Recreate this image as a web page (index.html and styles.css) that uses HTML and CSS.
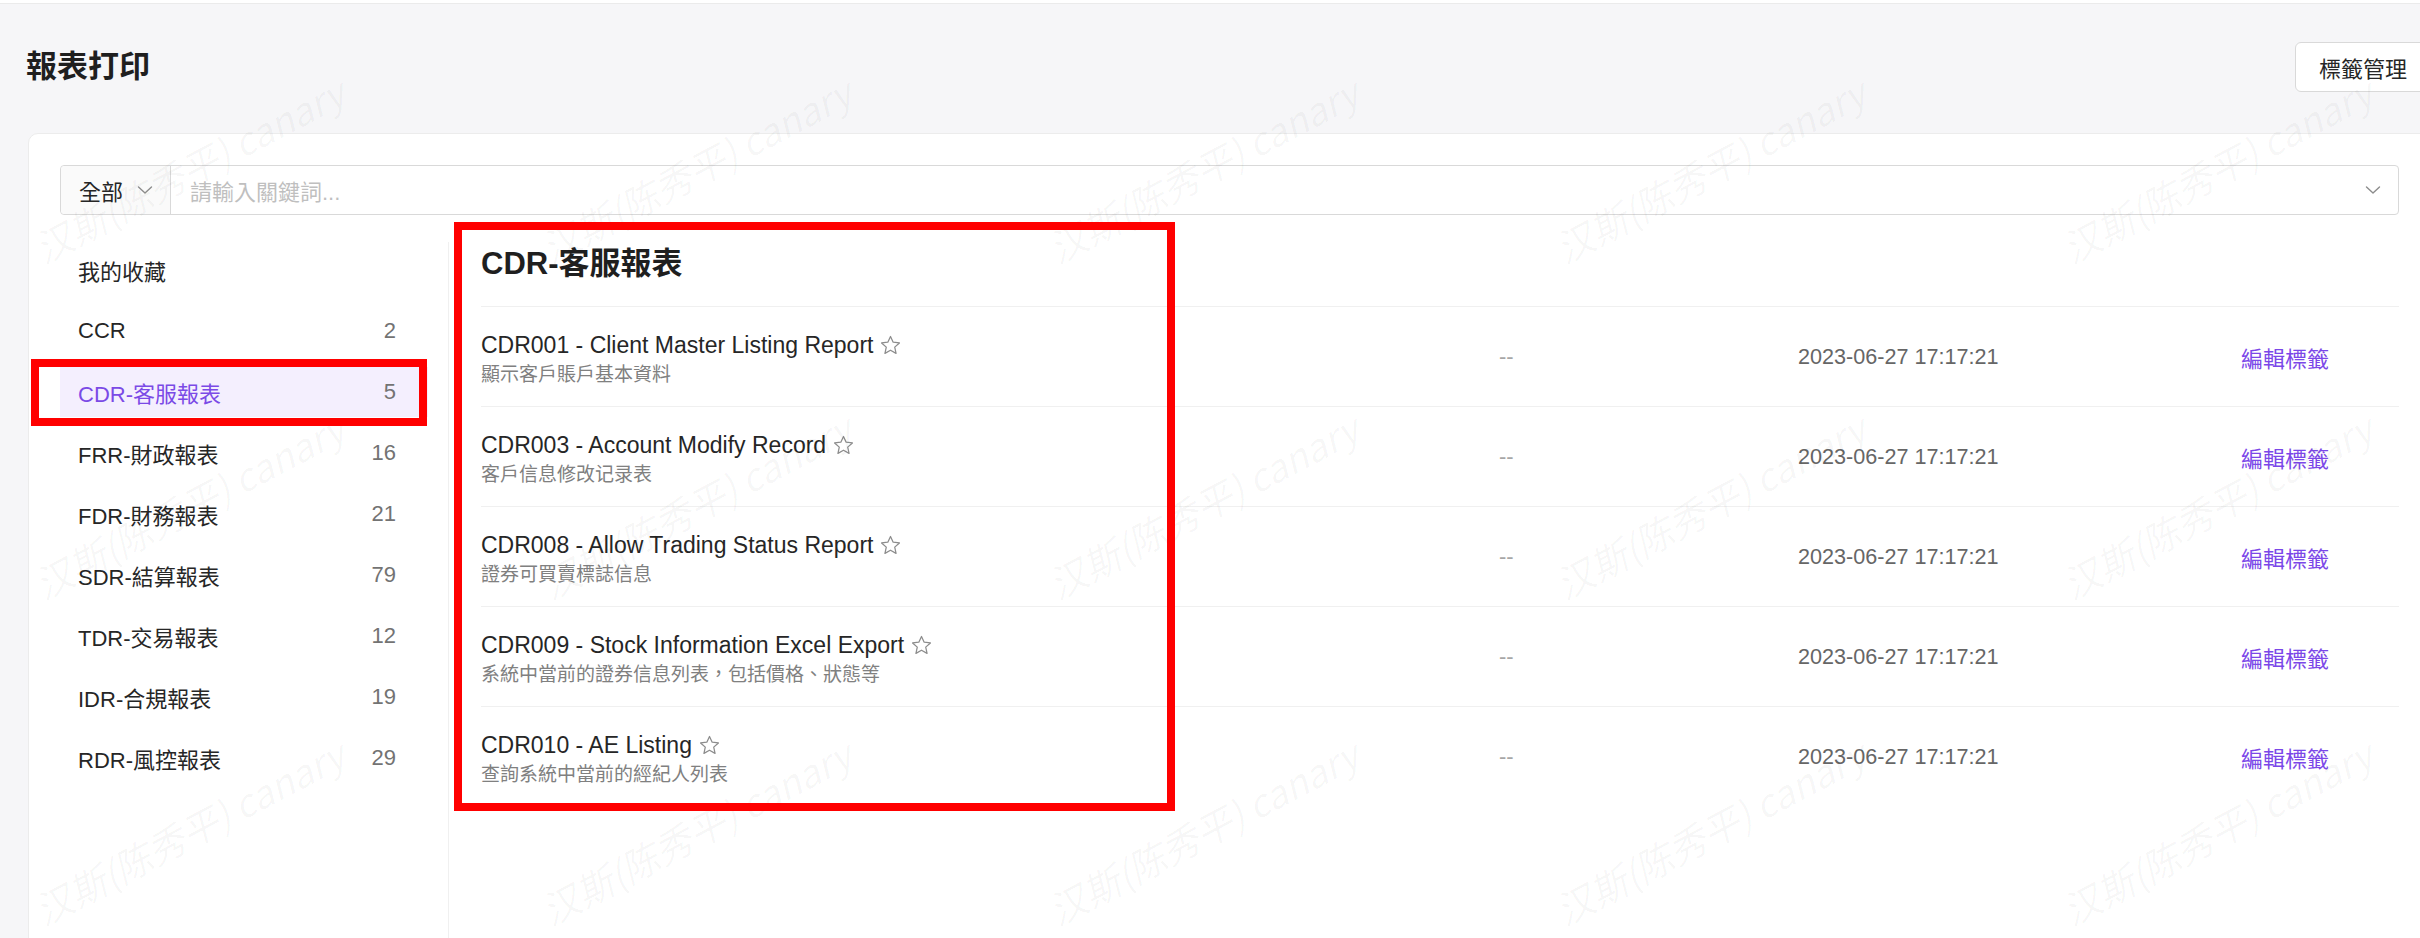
FILE: index.html
```html
<!DOCTYPE html>
<html lang="zh-Hant">
<head>
<meta charset="utf-8">
<title>報表打印</title>
<link rel="stylesheet" href="styles.css">
</head>
<body>
<div class="topbar"></div>
<div class="page">
  <header class="header">
    <h1 class="title">報表打印</h1>
    <button class="btn" type="button">標籤管理</button>
  </header>
  <section class="card">
    <div class="search">
      <div class="search-type">
        <span>全部</span>
        <svg class="chev" viewBox="0 0 16 16"><path d="M1.5 5 L8 11 L14.5 5" fill="none" stroke="#8c8c8c" stroke-width="1.4" stroke-linecap="round" stroke-linejoin="round"/></svg>
      </div>
      <div class="search-input">
        <span>請輸入關鍵詞...</span>
        <svg class="chev" viewBox="0 0 16 16"><path d="M1.5 5 L8 11 L14.5 5" fill="none" stroke="#8c8c8c" stroke-width="1.4" stroke-linecap="round" stroke-linejoin="round"/></svg>
      </div>
    </div>
    <div class="main">
      <nav class="side">
        <div class="side-item"><span>我的收藏</span></div>
        <div class="side-item"><span>CCR</span><span class="count">2</span></div>
        <div class="side-item active"><span>CDR-客服報表</span><span class="count">5</span></div>
        <div class="side-item"><span>FRR-財政報表</span><span class="count">16</span></div>
        <div class="side-item"><span>FDR-財務報表</span><span class="count">21</span></div>
        <div class="side-item"><span>SDR-結算報表</span><span class="count">79</span></div>
        <div class="side-item"><span>TDR-交易報表</span><span class="count">12</span></div>
        <div class="side-item"><span>IDR-合規報表</span><span class="count">19</span></div>
        <div class="side-item"><span>RDR-風控報表</span><span class="count">29</span></div>
      </nav>
      <div class="content">
        <h2 class="heading">CDR-客服報表</h2>

        <div class="row">
          <div class="name">
            <div class="name-title"><span>CDR001 - Client Master Listing Report</span><svg class="star" viewBox="0 0 24 24"><polygon points="12,2.6 14.8,8.6 21.3,9.3 16.4,13.7 17.8,20.2 12,16.9 6.2,20.2 7.6,13.7 2.7,9.3 9.2,8.6" fill="none" stroke="#8c8c8c" stroke-width="1.3" stroke-linejoin="round"/></svg></div>
            <div class="desc">顯示客戶賬戶基本資料</div>
          </div>
          <div class="dash">--</div>
          <div class="date">2023-06-27 17:17:21</div>
          <a class="action" href="#">編輯標籤</a>
        </div>

        <div class="row">
          <div class="name">
            <div class="name-title"><span>CDR003 - Account Modify Record</span><svg class="star" viewBox="0 0 24 24"><polygon points="12,2.6 14.8,8.6 21.3,9.3 16.4,13.7 17.8,20.2 12,16.9 6.2,20.2 7.6,13.7 2.7,9.3 9.2,8.6" fill="none" stroke="#8c8c8c" stroke-width="1.3" stroke-linejoin="round"/></svg></div>
            <div class="desc">客户信息修改记录表</div>
          </div>
          <div class="dash">--</div>
          <div class="date">2023-06-27 17:17:21</div>
          <a class="action" href="#">編輯標籤</a>
        </div>

        <div class="row">
          <div class="name">
            <div class="name-title"><span>CDR008 - Allow Trading Status Report</span><svg class="star" viewBox="0 0 24 24"><polygon points="12,2.6 14.8,8.6 21.3,9.3 16.4,13.7 17.8,20.2 12,16.9 6.2,20.2 7.6,13.7 2.7,9.3 9.2,8.6" fill="none" stroke="#8c8c8c" stroke-width="1.3" stroke-linejoin="round"/></svg></div>
            <div class="desc">證券可買賣標誌信息</div>
          </div>
          <div class="dash">--</div>
          <div class="date">2023-06-27 17:17:21</div>
          <a class="action" href="#">編輯標籤</a>
        </div>

        <div class="row">
          <div class="name">
            <div class="name-title"><span>CDR009 - Stock Information Excel Export</span><svg class="star" viewBox="0 0 24 24"><polygon points="12,2.6 14.8,8.6 21.3,9.3 16.4,13.7 17.8,20.2 12,16.9 6.2,20.2 7.6,13.7 2.7,9.3 9.2,8.6" fill="none" stroke="#8c8c8c" stroke-width="1.3" stroke-linejoin="round"/></svg></div>
            <div class="desc">系統中當前的證券信息列表，包括價格、狀態等</div>
          </div>
          <div class="dash">--</div>
          <div class="date">2023-06-27 17:17:21</div>
          <a class="action" href="#">編輯標籤</a>
        </div>

        <div class="row">
          <div class="name">
            <div class="name-title"><span>CDR010 - AE Listing</span><svg class="star" viewBox="0 0 24 24"><polygon points="12,2.6 14.8,8.6 21.3,9.3 16.4,13.7 17.8,20.2 12,16.9 6.2,20.2 7.6,13.7 2.7,9.3 9.2,8.6" fill="none" stroke="#8c8c8c" stroke-width="1.3" stroke-linejoin="round"/></svg></div>
            <div class="desc">查詢系統中當前的經紀人列表</div>
          </div>
          <div class="dash">--</div>
          <div class="date">2023-06-27 17:17:21</div>
          <a class="action" href="#">編輯標籤</a>
        </div>
      </div>
    </div>
  </section>
</div>

<div class="wm" aria-hidden="true">
  <span>汉斯(陈秀平) canary</span><span>汉斯(陈秀平) canary</span><span>汉斯(陈秀平) canary</span><span>汉斯(陈秀平) canary</span><span>汉斯(陈秀平) canary</span>
  <span>汉斯(陈秀平) canary</span><span>汉斯(陈秀平) canary</span><span>汉斯(陈秀平) canary</span><span>汉斯(陈秀平) canary</span><span>汉斯(陈秀平) canary</span>
  <span>汉斯(陈秀平) canary</span><span>汉斯(陈秀平) canary</span><span>汉斯(陈秀平) canary</span><span>汉斯(陈秀平) canary</span><span>汉斯(陈秀平) canary</span>
</div>

<div class="mark mark-side"></div>
<div class="mark mark-main"></div>
</body>
</html>
```

FILE: styles.css
```css
* { box-sizing: border-box; }

html, body { margin: 0; padding: 0; }

body {
  width: 2420px;
  height: 938px;
  overflow: hidden;
  position: relative;
  background: #f6f6f8;
  font-family: "Liberation Sans", "Noto Sans CJK SC", sans-serif;
  color: #262626;
}

.topbar {
  height: 4px;
  background: #ffffff;
  border-bottom: 1px solid #ebebeb;
}

.page {
  width: 2459px;
  padding: 38px 28px 0 28px;
}

.header {
  display: flex;
  justify-content: space-between;
  align-items: center;
  height: 50px;
}

.title {
  margin: 0 0 0 -2px;
  font-size: 31px;
  line-height: 50px;
  font-weight: 600;
  color: #1f1f1f;
}

.btn {
  height: 50px;
  padding: 0 23px;
  background: #ffffff;
  border: 1px solid #d9d9d9;
  border-radius: 6px;
  font-family: inherit;
  font-size: 22px;
  color: #262626;
}

.card {
  margin-top: 41px;
  background: #ffffff;
  border: 1px solid #ececec;
  border-radius: 10px;
  padding: 31px 31px 0;
  height: 900px;
}

.search {
  display: flex;
  height: 50px;
  border: 1px solid #d9d9d9;
  border-radius: 4px;
}

.search-type {
  width: 110px;
  flex: none;
  display: flex;
  align-items: center;
  gap: 14px;
  padding-left: 18px;
  background: #fafafa;
  border-right: 1px solid #d9d9d9;
  border-radius: 4px 0 0 4px;
  font-size: 22px;
  color: #262626;
}

.search-input {
  flex: 1;
  display: flex;
  align-items: center;
  justify-content: space-between;
  padding: 0 17px 0 19px;
  font-size: 22px;
  color: #bfbfbf;
}

.chev { width: 16px; height: 16px; display: block; }

.main {
  display: flex;
  margin-top: 27px;
}

.side {
  width: 389px;
  flex: none;
  padding: 3px 20px 0 0;
  border-right: 1px solid #f0f0f0;
  min-height: 720px;
}

.side-item {
  display: flex;
  justify-content: space-between;
  align-items: center;
  height: 50px;
  margin-bottom: 11px;
  padding: 0 32px 0 18px;
  font-size: 22px;
  color: #262626;
}

.side-item .count { color: #737373; }

.side-item.active {
  background: #f4effe;
  color: #7b4ae6;
}

.content {
  flex: 1;
  padding-left: 32px;
}

.heading {
  margin: 0 0 20px;
  font-size: 31px;
  line-height: 44px;
  font-weight: 700;
  color: #1f1f1f;
}

.row {
  display: grid;
  grid-template-columns: 1018px 299px 443px 1fr;
  align-items: center;
  height: 100px;
  border-top: 1px solid #f0f0f0;
}

.name {
  align-self: start;
  padding-top: 22px;
}

.name-title {
  display: flex;
  align-items: center;
  gap: 6px;
  font-size: 23px;
  line-height: 32px;
  color: #262626;
}

.star { width: 23px; height: 23px; display: block; }

.desc {
  font-size: 19px;
  line-height: 28px;
  color: #808080;
}

.dash {
  font-size: 22px;
  color: #a6a6a6;
}

.date {
  font-size: 21.6px;
  color: #666666;
}

.action {
  font-size: 22px;
  color: #7b47e8;
  text-decoration: none;
}

/* watermark overlay */
.wm {
  position: absolute;
  top: 0;
  left: 0;
  width: 2420px;
  height: 938px;
  overflow: hidden;
  display: grid;
  grid-template-columns: repeat(5, 507px);
  grid-template-rows: 336px 336px 266px;
  pointer-events: none;
}

.wm span {
  align-self: start;
  justify-self: start;
  margin: 228px 0 0 46px;
  height: 40px;
  font-family: "Noto Sans CJK SC", sans-serif;
  font-size: 38px;
  line-height: 40px;
  font-style: italic;
  white-space: nowrap;
  color: rgba(0, 0, 0, 0.035);
  transform-origin: 0 100%;
  transform: rotate(-28deg);
}

.wm span:nth-child(n+11) { margin-top: 218px; }

/* red annotation boxes */
.mark {
  position: absolute;
  border: 8px solid #ff0000;
  pointer-events: none;
}

.mark-side {
  left: 31px;
  top: 359px;
  width: 396px;
  height: 67px;
}

.mark-main {
  left: 454px;
  top: 222px;
  width: 721px;
  height: 589px;
}
```
